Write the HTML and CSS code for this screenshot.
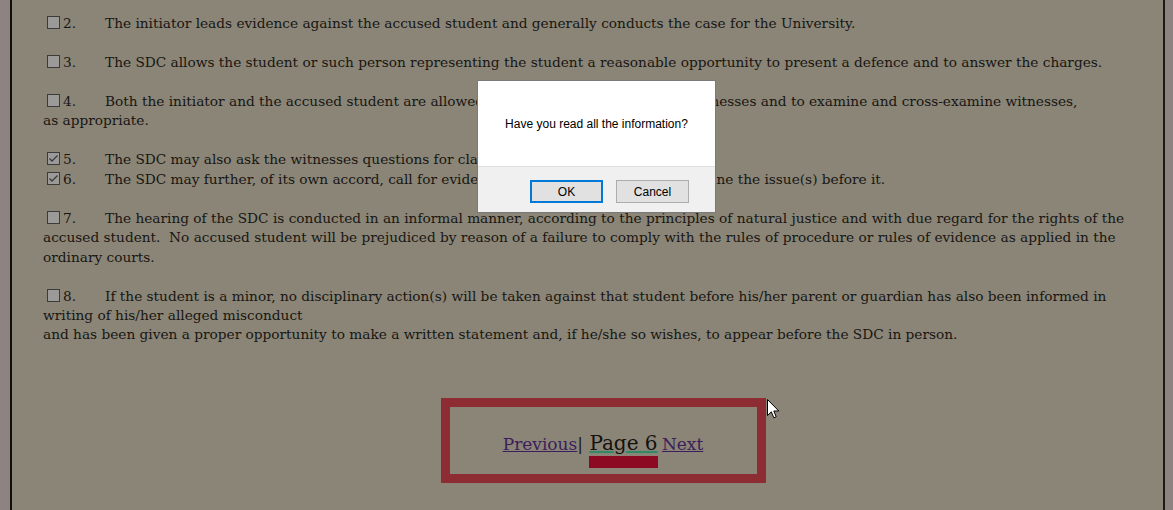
FILE: index.html
```html
<!DOCTYPE html>
<html>
<head>
<meta charset="utf-8">
<link rel="stylesheet" href="styles.css">
</head>
<body>
<div class="page">
  <div class="content">
    <p class="item"><span class="cb"></span><span class="num">2.</span>The initiator leads evidence against the accused student and generally conducts the case for the University.</p>
    <p class="item"><span class="cb"></span><span class="num">3.</span>The SDC allows the student or such person representing the student a reasonable opportunity to present a defence and to answer the charges.</p>
    <p class="item"><span class="cb"></span><span class="num">4.</span>Both the initiator and the accused student are allowed to present evidence and call witnesses and to examine and cross-examine witnesses,<br>as appropriate.</p>
    <p class="item"><span class="cb checked"><svg viewBox="0 0 13 13" width="13" height="13"><path d="M2.5 6.5 L5 9 L10.5 3.5" fill="none" stroke="#3a3a3a" stroke-width="1.3"/></svg></span><span class="num">5.</span>The SDC may also ask the witnesses questions for clarification.<br><span class="cb checked"><svg viewBox="0 0 13 13" width="13" height="13"><path d="M2.5 6.5 L5 9 L10.5 3.5" fill="none" stroke="#3a3a3a" stroke-width="1.3"/></svg></span><span class="num">6.</span>The SDC may further, of its own accord, call for evidence which may assist it to determine the issue(s) before it.</p>
    <p class="item"><span class="cb"></span><span class="num">7.</span>The hearing of the SDC is conducted in an informal manner, according to the principles of natural justice and with due regard for the rights of the<br>accused student.&nbsp; No accused student will be prejudiced by reason of a failure to comply with the rules of procedure or rules of evidence as applied in the<br>ordinary courts.</p>
    <p class="item"><span class="cb"></span><span class="num">8.</span>If the student is a minor, no disciplinary action(s) will be taken against that student before his/her parent or guardian has also been informed in<br>writing of his/her alleged misconduct<br>and has been given a proper opportunity to make a written statement and, if he/she so wishes, to appear before the SDC in person.</p>
    <div class="pager-wrap">
      <div class="pager"><a class="plink" href="#">Previous</a><span class="bar">|</span> <span class="current">Page 6</span> <a class="plink" href="#">Next</a></div>
    </div>
  </div>
</div>

<div class="dialog">
  <div class="dialog-body">Have you read all the information?</div>
  <div class="dialog-foot">
    <button class="btn btn-ok">OK</button>
    <button class="btn">Cancel</button>
  </div>
</div>

<svg class="cursor" width="13" height="21" viewBox="0 0 13 21"><path d="M0.5 0.5 L0.5 16.5 L4.3 12.8 L6.8 18.8 L9.2 17.8 L6.8 12 L11.8 12 Z" fill="#fff" stroke="#000" stroke-width="1"/></svg>
</body>
</html>
```
FILE: styles.css
```css
html, body {
  margin: 0;
  padding: 0;
  background: #8d8380;
  height: 510px;
  overflow: hidden;
}
.page {
  margin-left: 10px;
  width: 1151px;
  height: 510px;
  background: #8b8577;
  border-left: 2px solid #0e0e0e;
  border-right: 2px solid #1a1a1a;
}
.content {
  padding: 14px 0 0 31px;
  font-family: "DejaVu Serif", Georgia, serif;
  font-size: 13.7px;
  line-height: 19.4px;
  color: #181612;
}
.item {
  margin: 0 0 19.6px 0;
  white-space: nowrap;
}
.cb {
  display: inline-block;
  width: 11px;
  height: 11px;
  border: 1px solid #3b3b3b;
  background: #9b9a98;
  margin: 0 3px 0 4px;
  vertical-align: -1px;
  position: relative;
}
.cb svg {
  position: absolute;
  left: -1px;
  top: -1px;
}
.num {
  display: inline-block;
  width: 42px;
}
.pager-wrap {
  display: flex;
  justify-content: center;
  padding-top: 34px;
}
.pager {
  width: 307px;
  height: 44px;
  padding-top: 23px;
  border: 9px solid #8e2c34;
  text-align: center;
  line-height: 24px;
  white-space: nowrap;
}
.plink {
  color: #3c1e5c;
  font-size: 17px;
  text-decoration: underline;
}
.bar {
  font-size: 17px;
  color: #1c1a16;
}
.current {
  display: inline-block;
  font-size: 20px;
  line-height: 26px;
  border-bottom: 12px solid #8c0b22;
  margin-bottom: -17px;
  text-decoration: underline;
  text-decoration-color: #2f8a68;
  color: #14120e;
  margin-left: 2px;
}
.dialog {
  position: absolute;
  left: 477px;
  top: 80px;
  width: 237px;
  border: 1px solid #7a7a7a;
  background: #fff;
  font-family: "Liberation Sans", Arial, sans-serif;
  font-size: 12px;
  color: #000;
}
.dialog-body {
  height: 85px;
  display: flex;
  align-items: center;
  justify-content: center;
}
.dialog-foot {
  height: 46px;
  background: #f0f0f0;
  border-top: 1px solid #dfdfdf;
  display: flex;
  align-items: center;
  justify-content: flex-end;
  gap: 13px;
  padding-right: 26px;
  box-sizing: border-box;
  padding-top: 4px;
}
.btn {
  width: 73px;
  height: 23px;
  font-family: "Liberation Sans", Arial, sans-serif;
  font-size: 12px;
  background: #e1e1e1;
  border: 1px solid #adadad;
  color: #000;
  padding: 0;
}
.btn-ok {
  border: 2px solid #0078d7;
}
.cursor {
  position: absolute;
  left: 767px;
  top: 399px;
}
```
